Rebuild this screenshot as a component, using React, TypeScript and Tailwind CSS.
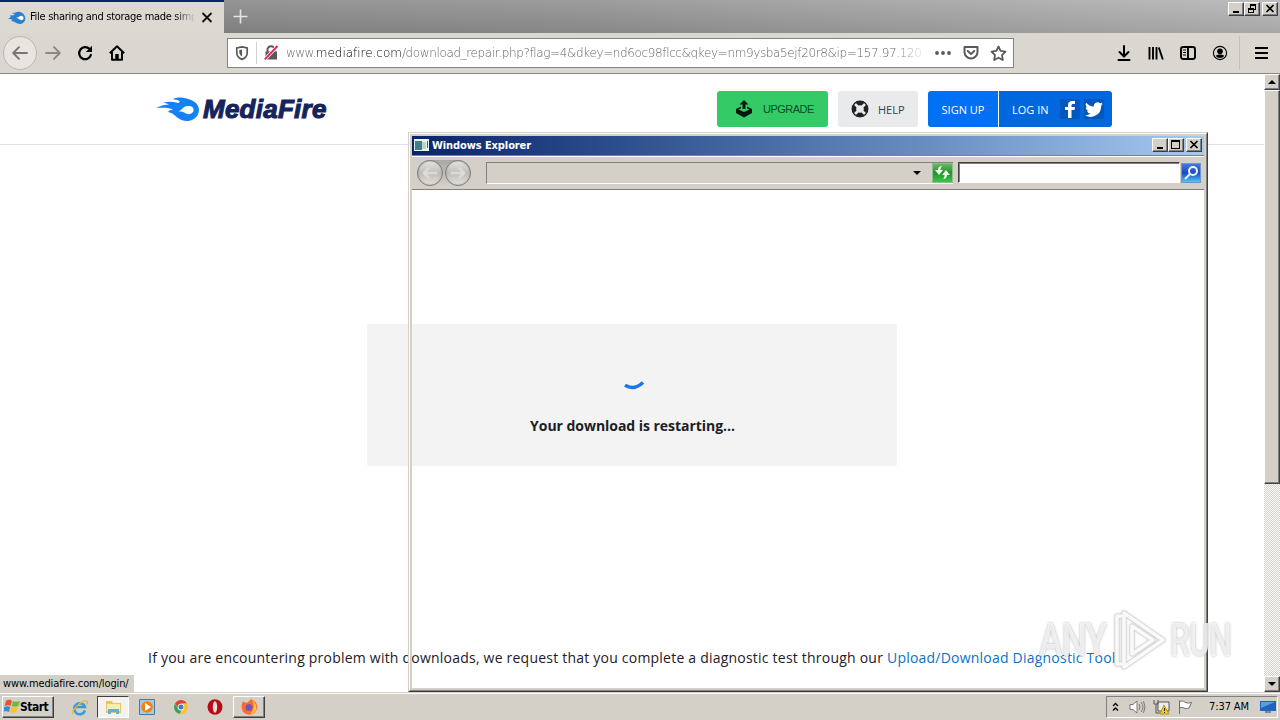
import type { ReactNode } from "react";

const RAISED = "border border-t-white border-l-white border-r-[#404040] border-b-[#404040] bg-[#d4d0c8] shadow-[inset_-1px_-1px_0_#808080]";

function WindowButtons({ restore = false }: { restore?: boolean }) {
  return (
    <div className="flex">
      <span className={`flex h-[14px] w-4 items-center justify-center ${RAISED}`}>
        <svg width="12" height="10" viewBox="0 0 12 10" shapeRendering="crispEdges"><path d="M3 7h6v2H3z" /></svg>
      </span>
      <span className={`flex h-[14px] w-4 items-center justify-center ${RAISED}`}>
        <svg width="12" height="10" viewBox="0 0 12 10" fill="none" stroke="#000" shapeRendering="crispEdges">
          {restore ? <path d="M4.5 4V.5h5v5H8M4 1.5h6M2.5 4.5h5v4h-5zM2 5.5h6" /> : <path d="M1.5.5h8v8h-8zM1 1.5h9" />}
        </svg>
      </span>
      <span className={`ml-[2px] flex h-[14px] w-4 items-center justify-center ${RAISED}`}>
        <svg width="12" height="10" viewBox="0 0 12 10" fill="none" stroke="#000" strokeWidth="1.7"><path d="m2.500 1 7 7M9.500 1l-7 7" /></svg>
      </span>
    </div>
  );
}

function TabIcon() {
  return (
    <svg width="18" height="14" viewBox="0 0 18 14">
      <path d="M0 8C3 6 3 5 2 4c3 1 4 0 5-1C5 3 4 2 4 2c4 0 5-2 8-1 7 2 7 11 0 12-4 0-5-3-9-3 2-1 2-2-3-2" fill="#2a7fd0" />
      <path d="M8 7c3 0 4-3 6-2 2 0 2 4 0 4-2 1-3-2-6-2" fill="#fff" />
    </svg>
  );
}

function TabStrip() {
  return (
    <div className="flex h-[33px] bg-[linear-gradient(to_bottom,#ffffff18,#00000014),linear-gradient(to_right,#858585,#929292_45%,#b6b6b6)]">
      <div className="flex h-full w-56 items-center border-t-2 border-[#0a246a] bg-[#dcd8d2] pl-2">
        <TabIcon />
        <span className="ml-1 w-[165px] overflow-hidden whitespace-nowrap [mask-image:linear-gradient(to_right,#000_88%,transparent)] font-['DejaVu_Sans_Condensed','DejaVu_Sans',sans-serif] text-[11px] tracking-[-0.3px]">
          File sharing and storage made simple
        </span>
        <svg className="ml-[6px]" width="12" height="12" viewBox="0 0 12 12" stroke="#111" strokeWidth="1.8"><path d="m1.5 1 9 9M10.5 1l-9 9" /></svg>
      </div>
      <svg className="mt-[9px] ml-[9px]" width="15" height="15" viewBox="0 0 15 15" stroke="#e4e4e4" strokeWidth="1.6"><path d="M7.5.5v14M.5 7.5h14" /></svg>
      <div className="mt-[2px] mr-[2px] ml-auto">
        <WindowButtons restore />
      </div>
    </div>
  );
}

function UrlField() {
  return (
    <div className="flex h-[30px] w-[787px] items-center border border-[#85837f] bg-white">
      <svg className="ml-[6px]" width="16" height="16" viewBox="0 0 16 16">
        <path d="M8 1.8 13.2 3v4.500c0 3.500-2 5.700-5.200 6.900-3.200-1.200-5.200-3.400-5.200-6.900V3z" fill="none" stroke="#59595b" strokeWidth="1.7" />
        <path d="M8 4.500v7C6 10.500 5.300 9 5.300 7.300V5z" fill="#59595b" />
      </svg>
      <span className="ml-[6px] h-[22px] w-px bg-[#d0d0d0]" />
      <svg className="ml-[6px]" width="16" height="16" viewBox="0 0 16 16">
        <path d="M4.500 7V4.800a3.500 3.500 0 0 1 7 0V7" fill="none" stroke="#59595b" strokeWidth="2" />
        <path d="M2.500 6.500h11.500V14.500H2.500z" fill="#59595b" />
        <path d="M14.500 1 1.800 14.300" stroke="#fff" strokeWidth="3.400" />
        <path d="M14.500 1 1.800 14.300" stroke="#e0245a" strokeWidth="1.9" />
      </svg>
      <span className="ml-[7px] w-[641px] overflow-hidden whitespace-nowrap [mask-image:linear-gradient(to_right,#000_95%,transparent)] font-['DejaVu_Sans',sans-serif] text-[12px] font-light tracking-[-0.37px] text-[#666666]">
        <span className="tracking-[-0.6px]">www.</span><span className="tracking-[-0.02px] text-black">mediafire.com</span>/download_repair.php?flag=4&amp;dkey=nd6oc98flcc&amp;qkey=nm9ysba5ejf20r8&amp;ip=157.97.120.250
      </span>
      <svg className="ml-[8px] shrink-0" width="16" height="16" viewBox="0 0 16 16" fill="#59595b"><circle cx="2" cy="8" r="1.900" /><circle cx="8" cy="8" r="1.900" /><circle cx="14" cy="8" r="1.900" /></svg>
      <svg className="ml-3 shrink-0" width="16" height="16" viewBox="0 0 16 16" fill="none" stroke="#59595b" strokeWidth="2" strokeLinecap="round" strokeLinejoin="round">
        <path d="M1.500 1.900h13v5a6.500 6.500 0 0 1-13 0z" /><path d="m4.800 6 3.200 3.100L11.200 6" />
      </svg>
      <svg className="ml-[11px] shrink-0" width="17" height="17" viewBox="0 0 17 17" fill="none" stroke="#59595b" strokeWidth="1.800" strokeLinejoin="round">
        <path d="m8.500 1.500 2.100 4.400 4.900.7L12 10.100l.8 4.900-4.300-2.300L4.200 15l.8-4.900-3.500-3.500 4.900-.7z" />
      </svg>
    </div>
  );
}

function BrowserToolbar() {
  return (
    <div className="flex h-[41px] items-center border-b border-[#898681] bg-[#dad6d0]">
      <span className="ml-[3px] flex h-[34px] w-[34px] items-center justify-center rounded-full border border-[#bbb8b3] bg-[#e8e5e0]">
        <svg width="16" height="16" viewBox="0 0 16 16" fill="none" stroke="#77756f" strokeWidth="1.9" strokeLinecap="round" strokeLinejoin="round"><path d="M15 8H1.500M7 2.200 1.200 8 7 13.800" /></svg>
      </span>
      <svg className="ml-2" width="16" height="16" viewBox="0 0 16 16" fill="none" stroke="#8b8883" strokeWidth="1.9" strokeLinecap="round" strokeLinejoin="round"><path d="M1 8h13.500M9 2.200 14.800 8 9 13.800" /></svg>
      <svg className="ml-4" width="16" height="16" viewBox="0 0 16 16"><path d="M12.600 4.100A6 6 0 1 0 13.900 10" fill="none" stroke="#000" strokeWidth="2.200" strokeLinecap="round" /><path d="M15 .8V7H8.800z" /></svg>
      <svg className="ml-4" width="16" height="16" viewBox="0 0 16 16" fill="none" stroke="#000" strokeWidth="1.900" strokeLinejoin="round"><path d="M.8 8.300 8 1.200l7.200 7.100M3 7v7.800h10V7" /><path d="M8 14.500V9" strokeWidth="3.500" /></svg>
      <div className="ml-[102px]"><UrlField /></div>
      <div className="ml-auto flex h-full items-center gap-4">
        <svg width="16" height="18" viewBox="0 0 16 18" fill="none" stroke="#000" strokeWidth="2"><path d="M8 2v10M3.500 8l4.500 4.500L12.500 8M2.500 16h11" strokeLinecap="round" strokeLinejoin="round" /></svg>
        <svg width="16" height="16" viewBox="0 0 16 16" stroke="#000" strokeWidth="1.900"><path d="M1.500 2v12.500M5 2v12.500M8.500 2v12.500M10.800 2.500l4 12" /></svg>
        <svg width="16" height="16" viewBox="0 0 16 16" fill="none" stroke="#000" strokeWidth="1.900"><rect x="1" y="2" width="14" height="12" rx="2.200" /><path d="M8 2v12" /><path d="M3 5h3M3 7.500h3M3 10h3" strokeWidth="1" /></svg>
        <svg width="16" height="16" viewBox="0 0 16 16"><circle cx="8" cy="8" r="6.600" fill="none" stroke="#000" strokeWidth="1.100" /><circle cx="8" cy="6.200" r="2.800" /><path d="M3.800 10.800c2-1.600 6.400-1.600 8.400 0-1.600 3-6.800 3-8.400 0" /></svg>
        <span className="-mr-2 -ml-[5px] h-[34px] w-px bg-[#c4c1bc]" />
        <svg className="ml-[7px] mr-3" width="13" height="14" viewBox="0 0 13 14" stroke="#000" strokeWidth="1.900"><path d="M0 2h13M0 7h13M0 12h13" /></svg>
      </div>
    </div>
  );
}

function MediaFireLogo() {
  return (
    <div className="flex items-center">
      <svg width="45" height="25" viewBox="0 0 45 25">
        <path d="M0 11c5-2 9-4 13-3-2-2-4-2-6-2 5-2 10-1 15 0 2 0 3-1 1-2C21 2 19 3 17 2c4-2 9-2 15 0 9 2 13 9 10 15-3 8-14 9-20 4-4-3-5-5-10-6 1-2 3-2 5-2-4-3-10-2-17-2" fill="#1481f4" />
        <path d="M21 15c5-1 6-7 12-6 6 0 6 7 1 8-5 1-6-4-13-2" fill="#fff" />
      </svg>
      <span className="ml-[2px] font-['Liberation_Sans',sans-serif] text-[26px] leading-6 font-bold tracking-[0.25px] text-[#16245c] italic [-webkit-text-stroke:1.1px_#16245c]">MediaFire</span>
    </div>
  );
}

function SiteHeader() {
  return (
    <header className="flex h-[71px] items-center border-b border-[#dfe2e8] pl-[156px] font-['Open_Sans',sans-serif] text-[11px]">
      <MediaFireLogo />
      <div className="mr-[152px] ml-auto flex">
        <div className="flex h-9 w-[111px] items-center rounded-[3px] bg-[#34cb67] pl-[18px] font-['Liberation_Sans',sans-serif] text-[#0e4923]">
          <svg width="18" height="18" viewBox="0 0 18 18" fill="#06180b"><path d="M9 0 4.500 4.500h3V9h3V4.500h3z" /><path d="M6 6.500 1 9v4l8 4.500 8-4.500V9l-5-2.500v1.700L14.500 9.500 9 12 3.500 9.500 6 8.200z" /></svg>
          <span className="ml-[10px] tracking-[-0.5px]">UPGRADE</span>
        </div>
        <div className="ml-[10px] flex h-9 w-20 items-center rounded-[3px] bg-[#e9eaeb] pl-[13px] text-[#37404b]">
          <svg width="18" height="18" viewBox="0 0 18 18"><circle cx="9" cy="9" r="5.900" fill="none" stroke="#222" strokeWidth="4.200" /><path d="m3.500 3.500 3 3M14.500 3.500l-3 3M3.500 14.500l3-3M14.500 14.500l-3-3" stroke="#e9eaeb" strokeWidth="2.600" /><circle cx="9" cy="9" r="7.800" fill="none" stroke="#222" strokeWidth="1.300" /></svg>
          <span className="mt-[2px] ml-[9px]">HELP</span>
        </div>
        <div className="ml-[10px] flex h-9 w-[70px] items-center justify-center rounded-l-[3px] bg-[#0070f5] pt-[2px] text-white">SIGN UP</div>
        <div className="ml-px flex h-9 w-[113px] items-center rounded-r-[3px] bg-[#0067df] pl-[13px] text-white">
          <span className="mt-[2px] w-[37px] whitespace-nowrap">LOG IN</span>
          <span className="ml-[11px] flex h-5 w-5 items-center justify-center rounded-[2px] bg-[#0058bd]">
            <svg width="10" height="17" viewBox="0 0 10 17" fill="#fff"><path d="M3 17V9H0V6h3V4c0-3 2-4 4-4h3v3H8C7 3 6.500 3.500 6.500 4.500V6H10l-.5 3h-3v8z" /></svg>
          </span>
          <span className="ml-1 flex h-5 w-5 items-center justify-center rounded-[2px] bg-[#0058bd]">
            <svg width="18" height="15" viewBox="0 0 24 20" fill="#fff"><path d="M24 2.400a10 10 0 0 1-2.800.8A5 5 0 0 0 23.300.5a10 10 0 0 1-3.100 1.200 5 5 0 0 0-8.400 4.500A14 14 0 0 1 1.700 1a5 5 0 0 0 1.500 6.600A5 5 0 0 1 1 7v.1a5 5 0 0 0 3.900 4.800 5 5 0 0 1-2.200.1 5 5 0 0 0 4.600 3.400A10 10 0 0 1 0 17.500 14 14 0 0 0 21.500 5z" /></svg>
          </span>
        </div>
      </div>
    </header>
  );
}

function Scrollbar() {
  return (
    <div className="flex w-4 flex-col justify-between bg-[repeating-conic-gradient(#d4d0c8_0_25%,#ffffff_0_50%)] bg-[length:2px_2px]">
      <div>
        <span className={`flex h-4 w-4 items-center justify-center ${RAISED}`}><svg width="8" height="4" viewBox="0 0 8 4"><path d="M4 0 8 4H0z" /></svg></span>
        <span className={`block h-[394px] w-4 ${RAISED}`} />
      </div>
      <span className={`flex h-4 w-4 items-center justify-center ${RAISED}`}><svg width="8" height="4" viewBox="0 0 8 4"><path d="m4 4 4-4H0z" /></svg></span>
    </div>
  );
}

function Page() {
  return (
    <div className="flex h-[618px] bg-white">
      <main className="flex w-[1264px] flex-col">
        <SiteHeader />
        <section className="mt-[179px] ml-[367px] flex h-[142px] w-[530px] flex-col items-center rounded-[2px] bg-[#f3f3f3] font-['Open_Sans',sans-serif]">
          <svg className="mt-[54px] ml-1" width="24" height="14" viewBox="0 0 24 14"><path d="M3 7.300Q12 12.800 21 4.500" fill="none" stroke="#1677f2" strokeWidth="3.400" /></svg>
          <p className="mt-[24px] ml-px text-[14px] leading-5 font-bold tracking-[-0.04px] text-[#1c2027]">Your download is restarting...</p>
        </section>
        <p className="mt-[182px] ml-[148px] font-['Open_Sans',sans-serif] text-[14px] leading-5 tracking-[0.218px] whitespace-nowrap text-[#1c2027]">
          If you are encountering problem with downloads, we request that you complete a diagnostic test through our <span className="text-[#0a71c9]">Upload/Download Diagnostic Tool</span>.
        </p>
      </main>
      <Scrollbar />
    </div>
  );
}

function NavOrb({ flip = false }: { flip?: boolean }) {
  return (
    <span className="flex h-[26px] w-[26px] items-center justify-center rounded-full border border-[#7f7d7a] bg-linear-to-b from-[#e8e6e2] via-[#bfbdb9] to-[#e4e2de] shadow-[inset_0_0_2px_#77777799]">
      <svg width="16" height="14" viewBox="0 0 16 14" className={flip ? "-scale-x-100" : ""} fill="none" stroke="#dddbd7" strokeWidth="2.500"><path d="M15 7H2M7 2 2 7l5 5" /></svg>
    </span>
  );
}

// The client area is see-through: only the frame and its bars are painted.
function ExplorerWindow() {
  return (
    <div className="absolute top-[132px] left-[408px] flex h-[560px] w-[800px] flex-col border border-t-[#d4d0c8] border-r-[#404040] border-b-[#404040] border-l-[#d4d0c8]">
      <div className="flex grow flex-col border border-t-white border-r-[#808080] border-b-[#808080] border-l-white">
        <div className="flex grow flex-col border-2 border-[#d4d0c8]">
          <div className="flex h-[19px] items-center bg-linear-to-r from-[#0a246a] to-[#a6caf0] pr-[2px] pl-[2px]">
            <svg className="-mt-[2px]" width="15" height="12" viewBox="0 0 15 12"><path d="M0 0h15v12H0z" fill="#e7f0f3" /><path d="M1 2h7v9H1z" fill="#437e8e" /><path d="M8 3h4v7H8z" fill="#b9d7b2" /><path d="M13 2h1v7h-1z" fill="#287090" /></svg>
            <span className="ml-[3px] grow pt-px font-['DejaVu_Sans_Condensed','DejaVu_Sans',sans-serif] text-[11px] leading-[18px] font-bold tracking-[-0.1px] text-white">Windows Explorer</span>
            <div className="-mt-px"><WindowButtons /></div>
          </div>
          <div className="flex h-[35px] items-center border-b border-[#808080] bg-[#d4d0c8] pt-px pl-[5px] shadow-[inset_0_1px_0_#808080,inset_0_2px_0_#ffffff]">
            <div className="flex gap-[2px] rounded-full bg-linear-to-b from-[#aaa8a4] to-[#d4d0c8]"><NavOrb /><NavOrb flip /></div>
            <div className="ml-[15px] flex h-[22px] w-[467px] items-center justify-end border-t border-b border-l border-t-[#808080] border-b-white border-l-[#808080]">
              <svg className="mr-[32px]" width="8" height="4" viewBox="0 0 8 4"><path d="m4 4 4-4H0z" /></svg>
            </div>
            <div className="-ml-[21px] flex h-5 w-[21px] items-center justify-center border border-[#93bc91] bg-linear-to-b from-[#63b961] via-[#23912d] to-[#3bc747]">
              <svg width="17" height="15" viewBox="0 0 17 15" fill="#efffea"><path d="M8 1C5 1 4 3 4 5H1l4 5 4-5H6.500c0-2 .5-3 1.500-4M9 14c3 0 4-2 4-4h3l-4-5-4 5h2.500c0 2-.5 3-1.500 4" /></svg>
            </div>
            <div className="ml-[5px] h-[21px] w-[222px] border border-t-[#404040] border-r-white border-b-white border-l-[#404040] bg-white shadow-[inset_1px_1px_0_#808080]" />
            <div className="ml-[1px] flex h-5 w-5 items-center justify-center border border-[#7295cc] bg-linear-to-b from-[#4777dc] via-[#184bc2] to-[#5cc3f0]">
              <svg width="15" height="15" viewBox="0 0 15 15" fill="none" stroke="#f0f7ff" strokeWidth="2"><circle cx="9" cy="6" r="4" /><path d="m6 9-5 5" /></svg>
            </div>
          </div>
          <div className="grow" />
        </div>
      </div>
    </div>
  );
}

function Watermark() {
  return (
    <div className="absolute top-[608px] left-[1039px] flex h-[64px] w-[196px] items-center font-['Roboto',sans-serif] text-[46px] leading-none font-medium text-white/75 [text-shadow:0_0_3px_#888888aa]">
      <span className="w-[72px] origin-left scale-x-[0.77] tracking-[-1px]">ANY</span>
      <svg className="shrink-0 drop-shadow-[0_0_1px_#99999999]" width="56" height="64" viewBox="0 0 56 64" fill="none" stroke="#cfcfcf" strokeOpacity=".65" strokeLinejoin="round">
        <path d="M11 8H6v48h5M13 5v54l39-27zM21 18v28l21-14z" strokeWidth="5" />
        <path d="M11 8H6v48h5M13 5v54l39-27zM21 18v28l21-14z" stroke="#fff" strokeOpacity=".9" strokeWidth="3.500" />
      </svg>
      <span className="ml-[3px] w-[64px] origin-left scale-x-[0.69] tracking-[-1px]">RUN</span>
    </div>
  );
}

function TaskSlot({ active = "", children }: { active?: string; children: ReactNode }) {
  return <span className={`flex h-[22px] w-8 items-center justify-center ${active}`}>{children}</span>;
}

function Taskbar() {
  return (
    <footer className="flex h-7 items-center border-t border-[#d4d0c8] bg-[#d4d0c8] pt-px font-['DejaVu_Sans_Condensed','DejaVu_Sans',sans-serif] text-[11px] shadow-[inset_0_1px_0_#ffffff]">
      <div className={`ml-[2px] flex h-[22px] w-[52px] items-center pl-[1px] ${RAISED}`}>
        <svg width="16" height="16" viewBox="0 0 16 16"><path d="M2 2c3-2 5-1 6 0L6.500 7C5 6 3 6 .5 7z" fill="#e65728" /><path d="M9 2c2 1 4 1 7 0l-1.500 5c-2 1-5 1-7 0z" fill="#75b642" /><path d="M.3 8c3-1 4-1 6 0l-1.500 5c-1-1-4-1-6 0z" fill="#388bd6" /><path d="M7 8c2 1 5 1 7 0l-1.500 5c-2 1-5 1-7 0z" fill="#f5c32b" /></svg>
        <span className="text-[12px] font-bold tracking-[-0.5px]">Start</span>
      </div>
      <div className="ml-[9px] flex gap-[2px]">
        <TaskSlot>
          <svg width="17" height="17" viewBox="0 0 17 17" fill="none"><path d="M14 11.500A5.500 5.500 0 1 1 14 8H5" stroke="#369bd8" strokeWidth="2.500" /><path d="M2 15C-1 12 12 0 16 2c1 1 0 3-1 4" stroke="#e6b93e" strokeWidth="1.300" /></svg>
        </TaskSlot>
        <TaskSlot active="border border-t-[#404040] border-l-[#404040] border-r-white border-b-white bg-[#f4f2ef]">
          <svg width="17" height="16" viewBox="0 0 17 16"><path d="M1 2h6l1 2h8v10H1z" fill="#e9c75e" /><path d="M2 5h13v7H2z" fill="#faedb0" /><path d="M3 15v-5h11v5h-3v-2H6v2z" fill="#65afd7" /></svg>
        </TaskSlot>
        <TaskSlot>
          <svg width="16" height="16" viewBox="0 0 16 16"><path d="M.5.500h15v15H.5z" fill="#a4cae6" stroke="#3e7ba9" /><circle cx="8" cy="8" r="5.800" fill="#f08113" /><path d="m6 4 6 4-6 4z" fill="#fff" /></svg>
        </TaskSlot>
        <TaskSlot>
          <svg width="14" height="14" viewBox="0 0 14 14"><path d="M1 3.500A7 7 0 0 1 13 3.500H7L4 8z" fill="#df4335" /><path d="M1 3.500 4 9l3 2-1 3A7 7 0 0 1 1 3.500" fill="#35a552" /><path d="M13 3.500A7 7 0 0 1 6 14l4-6-1-4.500z" fill="#f8c52a" /><circle cx="7" cy="7" r="3.200" fill="#fff" /><circle cx="7" cy="7" r="2.500" fill="#4378c8" /></svg>
        </TaskSlot>
        <TaskSlot>
          <svg width="16" height="16" viewBox="0 0 16 16"><ellipse cx="8" cy="8" rx="7.500" ry="7.700" fill="#b50e18" /><ellipse cx="8" cy="8" rx="2.200" ry="5.800" fill="#f0dedb" /></svg>
        </TaskSlot>
        <TaskSlot active={RAISED}>
          <svg width="17" height="16" viewBox="0 0 17 16"><path d="M2 2c1 2 3 1 4 2 2-2 3-3 4-4 5 2 7 6 6 10-3 8-14 7-15 0C0 7 1 4 2 2" fill="#ff6c2d" /><path d="M11 1c4 3 5 7 4 10-2 3-4 4-6 4 4-4 5-8 2-14" fill="#ffc52d" /><circle cx="8" cy="8.500" r="3.500" fill="#7653bf" /></svg>
        </TaskSlot>
      </div>
      <div className="mr-[2px] ml-auto flex h-[22px] w-[172px] items-center border border-t-[#808080] border-r-white border-b-white border-l-[#808080] pl-[5px]">
        <svg width="7" height="10" viewBox="0 0 7 10" fill="none" stroke="#000" strokeWidth="1.300"><path d="m1 4 2.500-2.500L6 4M1 8.500 3.500 6 6 8.500" /></svg>
        <svg className="ml-[10px]" width="17" height="16" viewBox="0 0 17 16" fill="#fff" stroke="#797979"><path d="M1 5.500h3L8 2v12l-4-3.500H1z" /><path d="M10 5q2 3 0 6M12 3q4 5 0 10M14.500 2q3 6 0 12" fill="none" /></svg>
        <svg className="ml-[7px]" width="17" height="16" viewBox="0 0 17 16" fill="#eee" stroke="#555"><path d="M5 3h11v9H5z" /><path d="M1 1v4h4V1M3 5v9h4" fill="none" /><path d="m11 6 5 9H7z" fill="#f6cf18" stroke="#b69618" /><path d="M11.500 9v3M11.500 13v1" stroke="#222" /></svg>
        <svg className="ml-[7px]" width="17" height="16" viewBox="0 0 17 16" fill="#fff" stroke="#6c6c6c"><path d="M2.500 15V1.500M2.500 2.500c5-2 5 3 12 1L12 9C7 11 7 7 2.500 9" /></svg>
        <span className="mt-px ml-[15px] w-[42px] whitespace-nowrap tracking-[-0.1px]">7:37 AM</span>
        <svg className="ml-[9px]" width="16" height="13" viewBox="0 0 16 13"><path d="M0 0h16v10H0z" fill="#2164bd" /><path d="M1 1h14L1 7z" fill="#5b9bdf" /><path d="M5 10h6v2H5z" fill="#6a8fae" /></svg>
      </div>
    </footer>
  );
}

export default function App() {
  return (
    <div className="relative h-[720px] w-[1280px] overflow-hidden bg-white text-black">
      <TabStrip />
      <BrowserToolbar />
      <Page />
      <Taskbar />
      <ExplorerWindow />
      <div className="absolute top-[675px] left-0 h-[18px] w-[134px] bg-[#d4d0c8] pl-[3px] font-['DejaVu_Sans_Condensed','DejaVu_Sans',sans-serif] text-[11px] leading-[18px] tracking-[-0.12px]">www.mediafire.com/login/</div>
      <Watermark />
    </div>
  );
}
